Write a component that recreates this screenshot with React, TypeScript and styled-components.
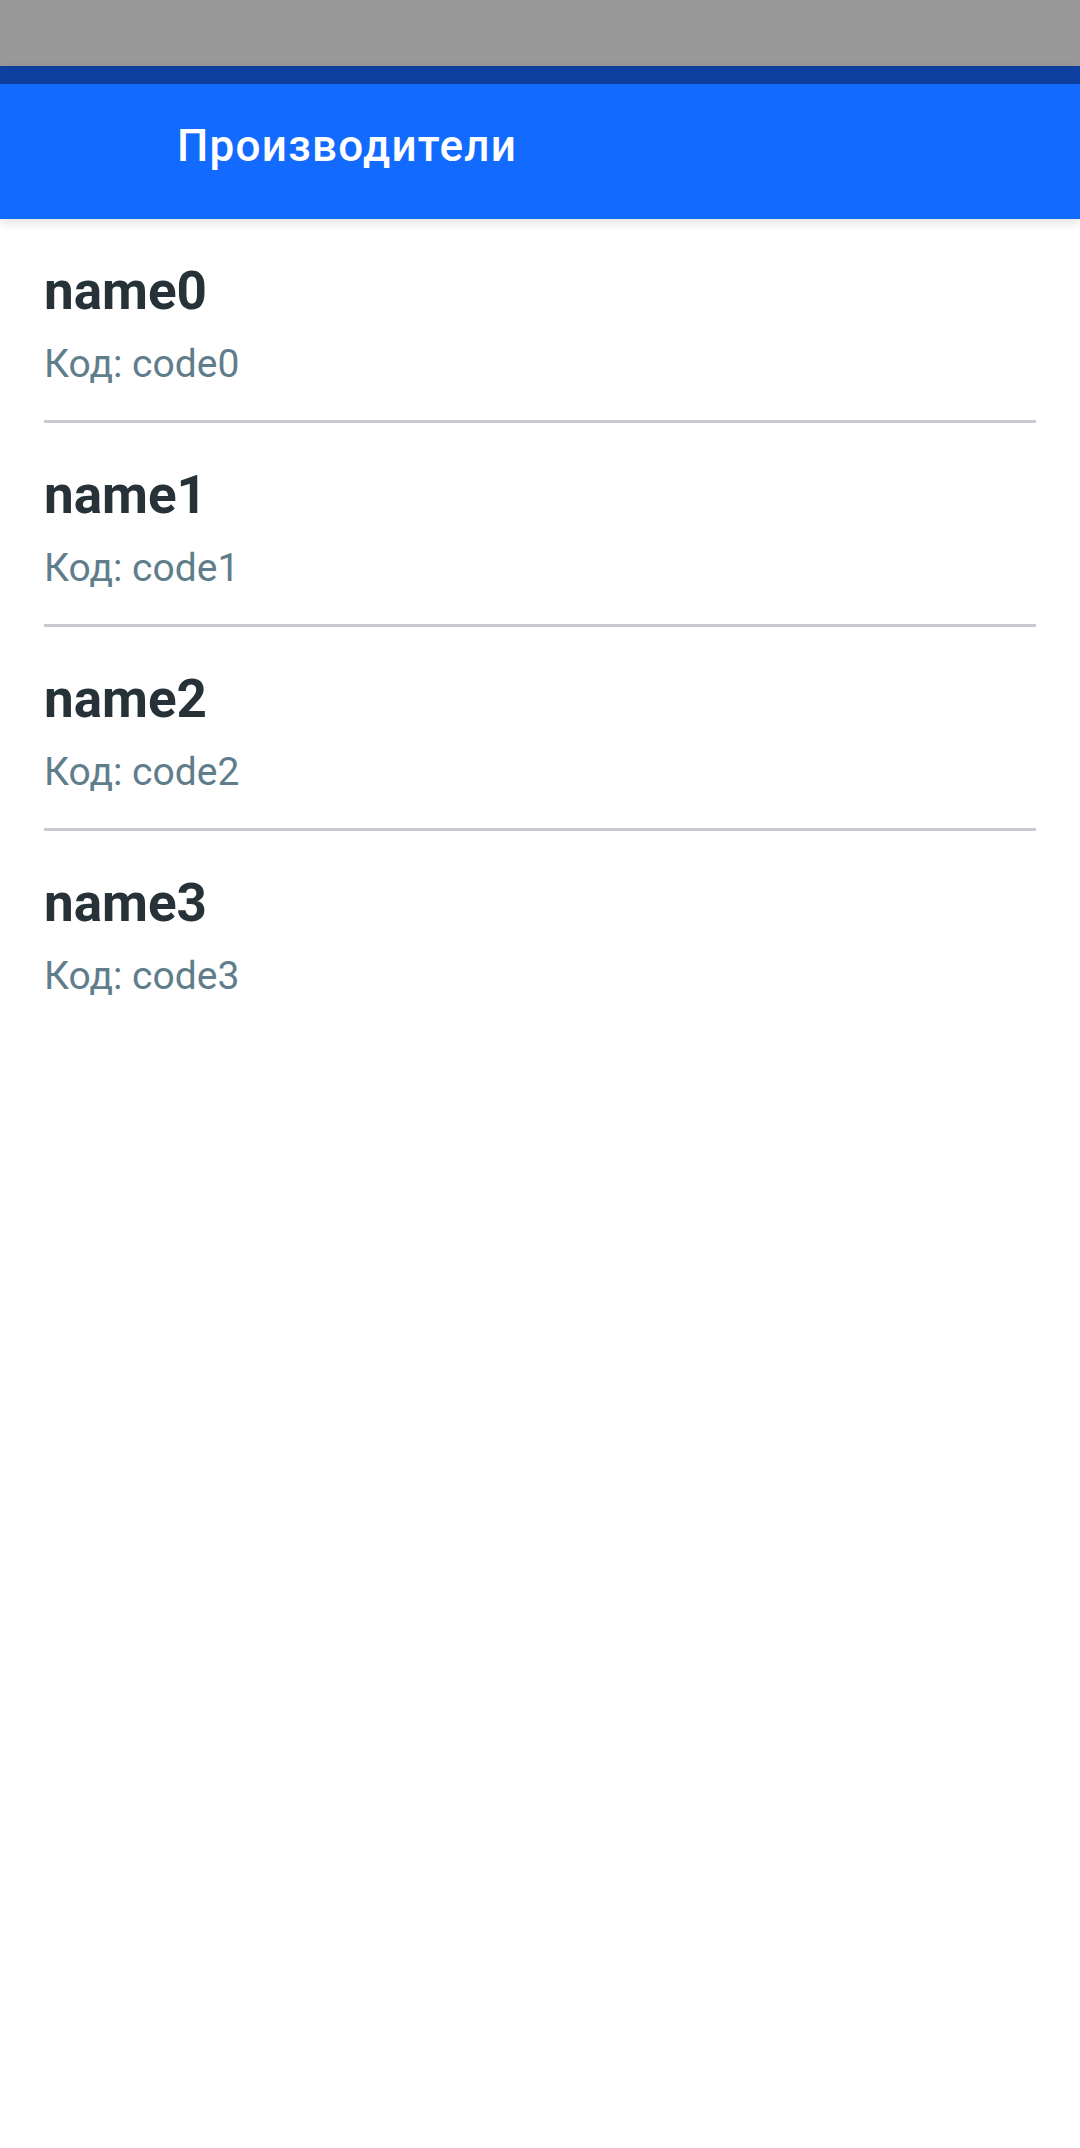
import styled, { createGlobalStyle } from 'styled-components';

const GlobalStyle = createGlobalStyle`
  html,
  body {
    margin: 0;
    padding: 0;
    background: #fff;
  }

  body {
    font-family: Roboto, 'Noto Sans', 'Liberation Sans', sans-serif;
  }
`;

const manufacturers = [0, 1, 2, 3].map((i) => ({
  id: i,
  name: `name${i}`,
  code: `code${i}`,
}));

const App = () => {
  return (
    <Screen>
      <GlobalStyle />
      <StatusBar />
      <AppBar>
        <SystemStrip />
        <Toolbar>
          <ToolbarTitle>Производители</ToolbarTitle>
        </Toolbar>
      </AppBar>

      <List>
        {manufacturers.map((item) => (
          <Row key={item.id}>
            <Name>{item.name}</Name>
            <Code>Код: {item.code}</Code>
          </Row>
        ))}
      </List>
    </Screen>
  );
};

export default App;

const Screen = styled.div`
  display: flex;
  flex-direction: column;

  width: 1080px;
  min-height: 2148px;
  background: #fff;
`;

const StatusBar = styled.div`
  height: 66px;
  background: #999999;
`;

const AppBar = styled.header`
  position: relative;
  z-index: 1;

  display: flex;
  flex-direction: column;

  box-shadow: 0 4px 10px rgba(0, 0, 0, 0.12);
`;

const SystemStrip = styled.div`
  height: 18px;
  background: #0d3f9e;
`;

const Toolbar = styled.div`
  display: flex;
  align-items: center;

  height: 135px;
  box-sizing: border-box;
  padding: 0 0 11px 177px;
  background: #136aff;
`;

const ToolbarTitle = styled.h1`
  margin: 0;

  color: #fff;
  font-size: 44px;
  font-weight: 500;
  letter-spacing: 1.3px;
`;

const List = styled.ul`
  display: flex;
  flex-direction: column;

  margin: 0;
  padding: 0 44px;
  list-style: none;
`;

const Row = styled.li`
  display: flex;
  flex-direction: column;
  gap: 19px;

  padding: 41px 0 33px;
  border-bottom: 3px solid #c7c9d5;

  &:last-child {
    border-bottom: none;
  }
`;

const Name = styled.span`
  color: #263238;
  font-size: 53px;
  font-weight: 700;
  line-height: 62px;
`;

const Code = styled.span`
  color: #607d8b;
  font-size: 39px;
  line-height: 46px;
`;
